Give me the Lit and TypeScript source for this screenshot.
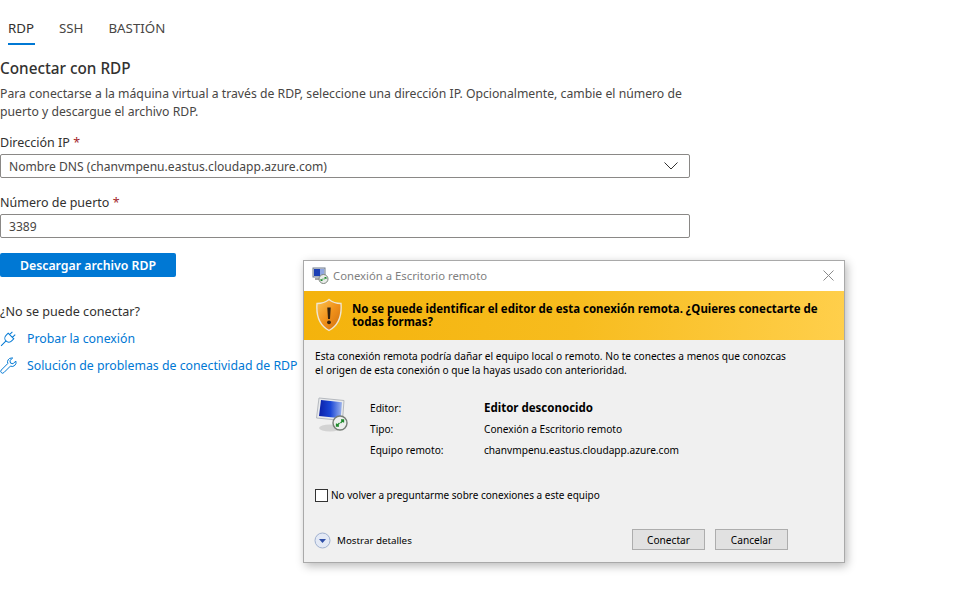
import { LitElement, html, css } from 'lit';
import { customElement } from 'lit/decorators.js';

@customElement('rdp-dialog')
class RdpDialog extends LitElement {
  static styles = css`
    :host {
      position: absolute;
      left: 303px;
      top: 260px;
      width: 542px;
      height: 303px;
      box-sizing: border-box;
      border: 1px solid #a9a9a9;
      background: #f0f0f0;
      box-shadow: 2px 3px 9px rgba(0, 0, 0, 0.28);
      display: flex;
      flex-direction: column;
      font-family: 'Noto Sans', 'Liberation Sans', sans-serif;
      font-size: 10.15px;
      color: #000;
    }
    .titlebar {
      height: 30px;
      box-sizing: border-box;
      background: #fff;
      display: flex;
      align-items: center;
      padding: 0 9px 1px 8px;
      gap: 4px;
      color: #7f7f7f;
      font-size: 11.3px;
    }
    .titlebar span { flex: 1; }
    .banner {
      height: 49px;
      box-sizing: border-box;
      background: linear-gradient(90deg, #f4b30c 0%, #f7bc1e 50%, #ffcf4b 100%);
      display: flex;
      padding: 7px 20px 0 11px;
      gap: 9px;
      font-weight: 700;
      font-size: 11.46px;
      line-height: 13px;
    }
    .banner p { margin: 4px 0 0; }
    .intro {
      margin: 9px 0 0 11px;
      width: 510px;
      line-height: 14px;
    }
    .details {
      display: flex;
      margin: 20px 0 0 12px;
    }
    .grid {
      margin-left: 22px;
      display: grid;
      grid-template-columns: 114px auto;
      grid-auto-rows: 21px;
      align-items: center;
    }
    .grid b { font-size: 11.5px; }
    .check {
      display: flex;
      align-items: center;
      gap: 3px;
      margin: 28px 0 0 11px;
      font-size: 10px;
    }
    .box {
      width: 11px;
      height: 11px;
      border: 1px solid #333;
      background: #fff;
    }
    .footer {
      display: flex;
      align-items: center;
      margin: 27px 56px 0 10px;
    }
    .more {
      display: flex;
      align-items: center;
      gap: 6px;
      flex: 1;
      font-size: 9.8px;
      padding-top: 1px;
    }
    .btn {
      width: 73px;
      height: 21px;
      box-sizing: border-box;
      border: 1px solid #adadad;
      background: #e1e1e1;
      display: flex;
      align-items: center;
      justify-content: center;
      margin-left: 10px;
    }
  `;

  render() {
    return html`
      <div class="titlebar">
        <svg width="17" height="17" viewBox="0 0 17 17">
          <rect x="1" y="1" width="12" height="9" fill="#dfe3ea" stroke="#6f7b8c" />
          <rect x="2" y="2" width="6" height="7" fill="#1b3fb5" />
          <rect x="8" y="2" width="4" height="7" fill="#8fa6e2" />
          <rect x="3" y="11" width="8" height="2" fill="#a5a5a5" />
          <circle cx="11.5" cy="12" r="4.5" fill="#e9ece9" stroke="#7d857d" />
          <path d="M9 13.500l2-2M9 12v1.500h1.500M14 10.500l-2 2M14 12v-1.500h-1.500" stroke="#1f8a2c" fill="none" />
        </svg>
        <span>Conexión a Escritorio remoto</span>
        <svg width="13" height="13" viewBox="0 0 13 13">
          <path d="M1.500 1.500l10 10M11.500 1.500l-10 10" stroke="#8a8a8a" fill="none" />
        </svg>
      </div>
      <div class="banner">
        <svg width="28" height="34" viewBox="0 0 28 34" style="flex:none">
          <defs>
            <linearGradient id="sh" x1="0" x2="1" y1="0" y2="1">
              <stop offset="0" stop-color="#fcc552" />
              <stop offset="0.5" stop-color="#f0921b" />
              <stop offset="1" stop-color="#cf6c0e" />
            </linearGradient>
          </defs>
          <path d="M14 1.500c3 2.500 8 4 12 4C27 18 24 27 14 32.500 4 27 1 18 2 5.500c4 0 9-1.500 12-4z" fill="url(#sh)" stroke="#efe6d2" stroke-width="1.400" />
          <path d="M12.300 9.500h3.400l-.7 11.500h-2z" fill="#33210e" />
          <circle cx="14" cy="24.300" r="1.900" fill="#33210e" />
        </svg>
        <p>No se puede identificar el editor de esta conexión remota. ¿Quieres conectarte de todas formas?</p>
      </div>
      <div class="intro">
        Esta conexión remota podría dañar el equipo local o remoto. No te conectes a menos que conozcas<br />
        el origen de esta conexión o que la hayas usado con anterioridad.
      </div>
      <div class="details">
        <svg width="32" height="36" viewBox="0 0 32 36" style="flex:none">
          <defs>
            <linearGradient id="scr" x1="0" x2="1" y1="0" y2="0">
              <stop offset="0" stop-color="#0a1fa8" />
              <stop offset="0.5" stop-color="#1b47d6" />
              <stop offset="1" stop-color="#9db4ec" />
            </linearGradient>
          </defs>
          <ellipse cx="14" cy="31" rx="11" ry="3.500" fill="#d3d3d3" />
          <path d="M3 1l25 2.500-1.500 20L0.500 21z" fill="#e8eaec" stroke="#b5b9bf" />
          <path d="M5 3l21 2.200-1.300 16L3 19z" fill="url(#scr)" />
          <circle cx="24" cy="26" r="7" fill="#eef0ee" stroke="#767d76" stroke-width="1.400" />
          <path d="M20.500 29l3-3M20.500 26.500V29H23M27.500 23l-3 3M27.500 25.500V23H25" stroke="#1f8a2c" stroke-width="1.300" fill="none" />
        </svg>
        <div class="grid">
          <span>Editor:</span><b>Editor desconocido</b>
          <span>Tipo:</span><span>Conexión a Escritorio remoto</span>
          <span>Equipo remoto:</span><span>chanvmpenu.eastus.cloudapp.azure.com</span>
        </div>
      </div>
      <div class="check">
        <div class="box"></div>
        No volver a preguntarme sobre conexiones a este equipo
      </div>
      <div class="footer">
        <div class="more">
          <svg width="17" height="17" viewBox="0 0 17 17">
            <circle cx="8.500" cy="8.500" r="7.500" fill="#e3e9f5" stroke="#9fb0cf" />
            <path d="M5 7h7l-3.500 4z" fill="#2f4fa8" />
          </svg>
          Mostrar detalles
        </div>
        <div class="btn">Conectar</div>
        <div class="btn">Cancelar</div>
      </div>
    `;
  }
}

@customElement('app-root')
class AppRoot extends LitElement {
  static styles = css`
    :host {
      display: block;
      position: relative;
      width: 956px;
      height: 611px;
      overflow: hidden;
      background: #fff;
      font-family: 'Noto Sans', 'Open Sans', sans-serif;
      font-size: 12.3px;
      color: #323130;
    }
    .panel { width: 690px; }
    .tabs {
      display: flex;
      gap: 24px;
      padding: 18px 0 0 8px;
      font-size: 13.300px;
    }
    .tab {
      height: 27px;
      box-sizing: border-box;
      line-height: 20px;
      color: #484644;
    }
    .tab.active {
      width: 27px;
      color: #323130;
      border-bottom: 2px solid #0078d4;
    }
    .tab.ssh { margin-right: 1px; }
    h2 {
      margin: 13px 0 0;
      font-size: 15.300px;
      font-weight: 500;
      line-height: 20px;
    }
    .desc {
      margin: 7px 0 0;
      line-height: 18px;
      font-size: 12.230px;
      color: #484644;
    }
    label {
      display: block;
      line-height: 18px;
      margin-top: 13px;
      font-size: 12.500px;
    }
    .field + label { margin-top: 16px; }
    label i { color: #a4262c; font-style: normal; }
    .field {
      height: 24px;
      box-sizing: border-box;
      border: 1px solid #8a8886;
      border-radius: 2px;
      margin-top: 2px;
      padding: 0 8px;
      display: flex;
      align-items: center;
      justify-content: space-between;
      font-size: 12.100px;
      color: #484644;
    }
    .field svg { margin-right: 3px; }
    .download {
      margin-top: 15px;
      width: 176px;
      height: 24px;
      border-radius: 2px;
      background: #0078d4;
      color: #fff;
      font-weight: 600;
      display: flex;
      align-items: center;
      justify-content: center;
    }
    .help { margin-top: 26px; line-height: 18px; font-size: 12.600px; }
    .link {
      display: flex;
      align-items: center;
      gap: 10px;
      height: 27px;
      color: #0078d4;
    }
    .links { margin-top: 4px; }
  `;

  render() {
    return html`
      <div class="panel">
        <div class="tabs">
          <div class="tab active">RDP</div>
          <div class="tab ssh">SSH</div>
          <div class="tab">BASTIÓN</div>
        </div>
        <h2>Conectar con RDP</h2>
        <p class="desc">
          Para conectarse a la máquina virtual a través de RDP, seleccione una dirección IP. Opcionalmente, cambie el número de
          puerto y descargue el archivo RDP.
        </p>
        <label>Dirección IP <i>*</i></label>
        <div class="field">
          Nombre DNS (chanvmpenu.eastus.cloudapp.azure.com)
          <svg width="14" height="8" viewBox="0 0 14 8"><path d="M.5.500L7 7l6.500-6.500" stroke="#323130" fill="none" /></svg>
        </div>
        <label>Número de puerto <i>*</i></label>
        <div class="field">3389</div>
        <div class="download">Descargar archivo RDP</div>
        <div class="help">¿No se puede conectar?</div>
        <div class="links">
          <div class="link">
            <svg width="17" height="17" viewBox="0 0 17 17" fill="none" stroke="#0078d4">
              <g transform="rotate(45 8.500 8.500)">
                <path d="M4.500 5h8v3a4 4 0 01-8 0zM6.500 5V1M10.500 5V1M8.500 12v7" />
              </g>
            </svg>
            Probar la conexión
          </div>
          <div class="link">
            <svg width="17" height="17" viewBox="0 0 17 17" fill="none" stroke="#0078d4">
              <path d="M11.500 1a4 4 0 00-3.700 5.500L1.300 13a1.800 1.800 0 002.600 2.600l6.500-6.500A4 4 0 0015.800 4l-2.800 2.800-2.500-.7-.6-2.500L12.700 1z" />
            </svg>
            Solución de problemas de conectividad de RDP
          </div>
        </div>
      </div>
      <rdp-dialog></rdp-dialog>
    `;
  }
}
